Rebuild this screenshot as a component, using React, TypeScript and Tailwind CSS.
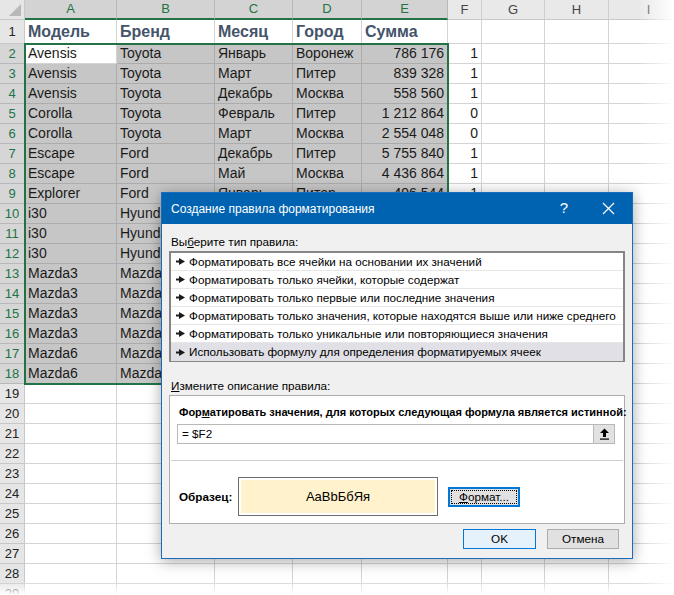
import React from "react";

const cols = [
  { k: "A", w: "w-[92px]", sel: true },
  { k: "B", w: "w-[98px]", sel: true },
  { k: "C", w: "w-[78px]", sel: true },
  { k: "D", w: "w-[69px]", sel: true },
  { k: "E", w: "w-[86px]", sel: true },
  { k: "F", w: "w-[34px]", sel: false },
  { k: "G", w: "w-[63px]", sel: false },
  { k: "H", w: "w-[64px]", sel: false },
  { k: "I", w: "w-[80px]", sel: false },
];

const heads = ["Модель", "Бренд", "Месяц", "Город", "Сумма"];

// rows 10..18 only show A and B; the rest lies under the dialog
const data = [
  ["Avensis", "Toyota", "Январь", "Воронеж", "786 176", "1"],
  ["Avensis", "Toyota", "Март", "Питер", "839 328", "1"],
  ["Avensis", "Toyota", "Декабрь", "Москва", "558 560", "1"],
  ["Corolla", "Toyota", "Февраль", "Питер", "1 212 864", "0"],
  ["Corolla", "Toyota", "Март", "Москва", "2 554 048", "0"],
  ["Escape", "Ford", "Декабрь", "Питер", "5 755 840", "1"],
  ["Escape", "Ford", "Май", "Москва", "4 436 864", "1"],
  ["Explorer", "Ford", "Январь", "Питер", "496 544", "1"],
  ["i30", "Hyundai"],
  ["i30", "Hyundai"],
  ["i30", "Hyundai"],
  ["Mazda3", "Mazda"],
  ["Mazda3", "Mazda"],
  ["Mazda3", "Mazda"],
  ["Mazda3", "Mazda"],
  ["Mazda6", "Mazda"],
  ["Mazda6", "Mazda"],
];

const rules = [
  "Форматировать все ячейки на основании их значений",
  "Форматировать только ячейки, которые содержат",
  "Форматировать только первые или последние значения",
  "Форматировать только значения, которые находятся выше или ниже среднего",
  "Форматировать только уникальные или повторяющиеся значения",
  "Использовать формулу для определения форматируемых ячеек",
];

function RuleArrow() {
  return (
    <svg width="9" height="7" viewBox="0 0 9 7" className="shrink-0">
      <rect x="0" y="2.5" width="4" height="2" fill="#1a1a1a" />
      <path d="M3 0 L9 3.5 L3 7 Z" fill="#1a1a1a" />
    </svg>
  );
}

function Sheet() {
  const emptyRows = Array.from({ length: 11 }, (_, i) => i + 19);
  return (
    <div className="flex flex-col font-['Liberation_Sans',Arial,sans-serif] text-[14px] text-[#1a1a1a]">
      {/* column letters */}
      <div className="flex h-[20px]">
        <div className="w-[25px] h-[20px] shrink-0 bg-[#e6e6e6] border-r border-b border-[#c8c8c8] relative">
          <svg width="12" height="12" viewBox="0 0 12 12" className="absolute right-[3px] bottom-[3px]">
            <path d="M12 0 L12 12 L0 12 Z" fill="#b8b8b8" />
          </svg>
        </div>
        {cols.map((c) => (
          <div
            key={c.k}
            className={
              c.w +
              " shrink-0 h-[20px] flex items-center justify-center text-[13px] border-r " +
              (c.sel
                ? "bg-[#d3d3d3] text-[#217346] border-[#b8b8b8] border-b-2 border-b-[#217346]"
                : "bg-[#e9e9e9] text-[#444] border-[#cfcfcf] border-b border-b-[#c8c8c8]")
            }
          >
            {c.k}
          </div>
        ))}
      </div>

      {/* row 1: headers */}
      <div className="flex h-[24px]">
        <div className="w-[25px] shrink-0 bg-[#e6e6e6] border-r border-b border-[#c8c8c8] flex items-center justify-center text-[13px] text-[#222]">
          1
        </div>
        {cols.map((c, i) => (
          <div
            key={c.k}
            className={c.w + " shrink-0 border-r border-b border-[#d4d4d4] bg-white flex items-center pl-[3px] font-bold text-[16px] text-[#44546a]"}
          >
            {heads[i] ?? ""}
          </div>
        ))}
      </div>

      {/* data rows */}
      {data.map((r, ri) => (
        <div key={ri} className="flex h-[20px]">
          <div className="w-[25px] shrink-0 bg-[#d6d6d6] border-r border-b border-[#b8b8b8] flex items-center justify-center text-[13px] text-[#217346]">
            {ri + 2}
          </div>
          {cols.map((c, ci) => {
            const active = ri === 0 && ci === 0;
            const inSel = ci < 5;
            const right = ci === 4 || ci === 5;
            return (
              <div
                key={c.k}
                className={
                  c.w +
                  " shrink-0 border-r border-b flex items-center px-[3px] whitespace-nowrap overflow-hidden " +
                  (right ? "justify-end " : "") +
                  (inSel
                    ? active
                      ? "bg-white border-[#d4d4d4]"
                      : "bg-[#c6c6c6] border-[#acacac]"
                    : "bg-white border-[#d4d4d4]")
                }
              >
                {r[ci] ?? ""}
              </div>
            );
          })}
        </div>
      ))}

      {/* empty rows */}
      {emptyRows.map((n) => (
        <div key={n} className="flex h-[20px]">
          <div className="w-[25px] shrink-0 bg-[#e6e6e6] border-r border-b border-[#c8c8c8] flex items-center justify-center text-[13px] text-[#222]">
            {n}
          </div>
          {cols.map((c) => (
            <div key={c.k} className={c.w + " shrink-0 border-r border-b border-[#d4d4d4] bg-white"} />
          ))}
        </div>
      ))}
    </div>
  );
}

function Dialog() {
  return (
    <div className="absolute left-[161px] top-[192px] w-[472px] h-[367px] bg-[#f0f0f0] border border-[#1a6bbd] shadow-[0_2px_14px_rgba(0,0,0,0.35)] flex flex-col font-['Liberation_Sans',Arial,sans-serif] text-[11.7px] text-[#000]">
      {/* title bar */}
      <div className="h-[31px] shrink-0 bg-[#0063b1] flex items-center pl-[9px] text-white text-[12px]">
        <span className="flex-1">Создание правила форматирования</span>
        <span className="w-[20px] text-center text-[15px] mr-[28px]">?</span>
        <svg width="13" height="13" viewBox="0 0 13 13" className="mr-[17px]">
          <path d="M1 1 L12 12 M12 1 L1 12" stroke="white" strokeWidth="1.2" />
        </svg>
      </div>

      <div className="flex flex-col px-[7px] pt-[10px]">
        <div className="h-[16px] leading-[16px] pl-[2px]">
          Вы<span className="underline">б</span>ерите тип правила:
        </div>
        <div className="mt-[1px] h-[111px] border-2 border-[#868686] bg-white flex flex-col">
          {rules.map((t, i) => (
            <div
              key={i}
              className={
                "h-[18px] shrink-0 flex items-center gap-[4px] pl-[5px] whitespace-nowrap " +
                (i === rules.length - 1 ? "bg-[#e0e0e6]" : "border-b border-[#e6e6e6]")
              }
            >
              <RuleArrow />
              <span>{t}</span>
            </div>
          ))}
        </div>

        <div className="mt-[16px] h-[16px] leading-[16px] pl-[2px]">
          <span className="underline">И</span>змените описание правила:
        </div>
        <div className="mt-[1px] h-[129px] border border-[#adadad] bg-white flex flex-col">
          <div className="pt-[8px] pl-[9px] h-[24px] leading-[16px] font-bold text-[11px] whitespace-nowrap">
            Фор<span className="underline">м</span>атировать значения, для которых следующая формула является истинной:
          </div>
          <div className="mt-[4px] ml-[7px] mr-[9px] h-[20px] border border-[#b8b8b8] flex items-center">
            <span className="flex-1 pl-[4px]">= $F2</span>
            <div className="w-[21px] h-[18px] bg-[#e1e1e1] border-l border-[#b8b8b8] flex items-center justify-center">
              <svg width="11" height="12" viewBox="0 0 11 12">
                <path d="M5.5 0.5 L10 5 L7 5 L7 9 L4 9 L4 5 L1 5 Z" fill="#000" />
                <rect x="1" y="10.5" width="9" height="1.2" fill="#000" />
              </svg>
            </div>
          </div>
          <div className="mt-[16px] mx-[1px] h-px bg-[#cfcfcf]" />
          <div className="mt-[16px] flex items-center pl-[9px]">
            <span className="font-bold w-[59px]">Образец:</span>
            <div className="w-[200px] h-[39px] border border-[#6d6d6d] bg-white p-[2px]">
              <div className="w-full h-full bg-[#fff2cc] flex items-center justify-center text-[13px]">AaBbБбЯя</div>
            </div>
            <div className="ml-[10px] w-[72px] h-[20px] border-2 border-[#0078d7] bg-[#e1e1e1] p-[1px]">
              <div className="w-full h-full border border-dotted border-[#000] flex items-center justify-center">
                <span>
                  <span className="underline">Ф</span>ормат...
                </span>
              </div>
            </div>
          </div>
        </div>

        <div className="mt-[5px] flex justify-end gap-[11px] pr-[6px]">
          <div className="w-[73px] h-[20px] bg-[#e5f1fb] border border-[#0078d7] flex items-center justify-center">OK</div>
          <div className="w-[72px] h-[20px] bg-[#e1e1e1] border border-[#adadad] flex items-center justify-center">Отмена</div>
        </div>
      </div>
    </div>
  );
}

export default function App() {
  return (
    <div className="relative w-[674px] h-[595px] overflow-hidden bg-white">
      <Sheet />
      {/* selection frame over A2:E18 */}
      <div className="absolute left-[24px] top-[43px] w-[425px] h-[342px] border-2 border-[#217346] pointer-events-none" />
      <Dialog />
      {/* screenshot edge fades */}
      <div className="absolute right-0 top-0 bottom-0 w-[36px] bg-linear-to-r from-white/0 to-white pointer-events-none" />
      <div className="absolute left-0 right-0 bottom-0 h-[14px] bg-linear-to-b from-white/0 to-white pointer-events-none" />
    </div>
  );
}
